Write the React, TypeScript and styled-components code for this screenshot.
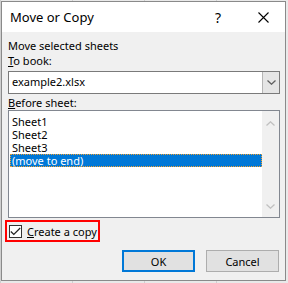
import React from "react";
import styled, { createGlobalStyle } from "styled-components";

const Global = createGlobalStyle`
  html, body { margin: 0; padding: 0; }
  body {
    width: 288px; height: 283px; overflow: hidden;
    background-color: #e9e9e9;
    background-image: linear-gradient(to right, #cfcfcf 1px, transparent 1px);
    background-size: 72px 100%;
    font-family: "Noto Sans", "Open Sans", sans-serif;
  }
`;

const Dialog = styled.div`
  box-sizing: border-box;
  margin: 1px 0 0 1px;
  width: 285px;
  height: 280px;
  border: 1px solid #8a8a8a;
  background: #f0f0f0;
  display: flex;
  flex-direction: column;
`;

const TitleBar = styled.div`
  height: 30px;
  background: #ffffff;
  display: flex;
  align-items: center;
  padding-left: 8px;
  font-size: 13px;
  color: #000;
`;

const Title = styled.div`
  flex: 1;
`;

const TitleButton = styled.div<{ $w: number }>`
  width: ${(p) => p.$w}px;
  height: 30px;
  display: flex;
  align-items: center;
  justify-content: center;
  font-size: 14px;
  color: #000;
`;

const Body = styled.div`
  flex: 1;
  display: flex;
  flex-direction: column;
  padding: 6px 5px 0 6px;
  font-size: 11px;
  color: #000;
`;

const Label = styled.div<{ $mt?: number }>`
  line-height: 15px;
  height: 15px;
  margin-top: ${(p) => p.$mt ?? 0}px;
  white-space: nowrap;
`;

const Combo = styled.div`
  box-sizing: border-box;
  margin-top: 3px;
  height: 23px;
  border: 1px solid #7a7a7a;
  background: #fff;
  display: flex;
`;

const ComboText = styled.div`
  flex: 1;
  line-height: 19px;
  padding-left: 3px;
`;

const ComboButton = styled.div`
  box-sizing: border-box;
  width: 17px;
  background: #e5e5e5;
  border-left: 1px solid #b5b5b5;
  display: flex;
  align-items: center;
  justify-content: center;
`;

const List = styled.div`
  box-sizing: border-box;
  height: 108px;
  border: 1px solid #828790;
  background: #fff;
  display: flex;
`;

const Items = styled.div`
  flex: 1;
  padding: 4px 0 0 1px;
  display: flex;
  flex-direction: column;
`;

const Item = styled.div<{ $sel?: boolean }>`
  box-sizing: border-box;
  height: 13px;
  line-height: 13px;
  padding-left: 2px;
  color: ${(p) => (p.$sel ? "#fff" : "#000")};
  background: ${(p) => (p.$sel ? "#0078d7" : "transparent")};
  outline: ${(p) => (p.$sel ? "1px dotted #f0a030" : "none")};
  outline-offset: -1px;
  white-space: nowrap;
`;

const ScrollBar = styled.div`
  width: 17px;
  background: #f0f0f0;
  display: flex;
  flex-direction: column;
  justify-content: space-between;
  align-items: center;
  padding: 10px 0 8px;
`;

const CheckRow = styled.div`
  box-sizing: border-box;
  margin: 2px 0 0 -3px;
  width: 95px;
  height: 22px;
  border: 2px solid #ff0000;
  display: flex;
  align-items: center;
  gap: 5px;
  padding-left: 2px;
  white-space: nowrap;
`;

const CheckBox = styled.div`
  box-sizing: border-box;
  width: 13px;
  height: 13px;
  border: 1px solid #333;
  background: #fff;
  display: flex;
  align-items: center;
  justify-content: center;
`;

const ButtonRow = styled.div`
  display: flex;
  justify-content: flex-end;
  gap: 11px;
  margin-top: 8px;
  padding-right: 1px;
`;

const Button = styled.div<{ $def?: boolean }>`
  box-sizing: border-box;
  width: 73px;
  height: 22px;
  background: #e1e1e1;
  border: ${(p) => (p.$def ? "2px solid #0078d7" : "1px solid #adadad")};
  display: flex;
  align-items: center;
  justify-content: center;
`;

const Chevron = ({ up, color }: { up?: boolean; color: string }) => (
  <svg width="9" height="5" viewBox="0 0 9 5">
    <path
      d={up ? "M0.5 4.5 L4.5 0.8 L8.5 4.5" : "M0.5 0.5 L4.5 4.2 L8.5 0.5"}
      fill="none"
      stroke={color}
      strokeWidth="1.3"
    />
  </svg>
);

export default function App() {
  return (
    <>
      <Global />
      <Dialog>
        <TitleBar>
          <Title>Move or Copy</Title>
          <TitleButton $w={46}>?</TitleButton>
          <TitleButton $w={44}>
            <svg width="11" height="11" viewBox="0 0 11 11">
              <path d="M0.5 0.5 L10.5 10.5 M10.5 0.5 L0.5 10.5" stroke="#000" strokeWidth="1.1" />
            </svg>
          </TitleButton>
        </TitleBar>
        <Body>
          <Label>Move selected sheets</Label>
          <Label>
            <u>T</u>o book:
          </Label>
          <Combo>
            <ComboText>example2.xlsx</ComboText>
            <ComboButton>
              <Chevron color="#606060" />
            </ComboButton>
          </Combo>
          <Label $mt={1}>
            <u>B</u>efore sheet:
          </Label>
          <List>
            <Items>
              <Item>Sheet1</Item>
              <Item>Sheet2</Item>
              <Item>Sheet3</Item>
              <Item $sel>(move to end)</Item>
            </Items>
            <ScrollBar>
              <Chevron up color="#c0c0c0" />
              <Chevron color="#c0c0c0" />
            </ScrollBar>
          </List>
          <CheckRow>
            <CheckBox>
              <svg width="11" height="9" viewBox="0 0 11 9">
                <path d="M0.8 4.5 L3.8 7.5 L10.2 1" fill="none" stroke="#222" strokeWidth="1.2" />
              </svg>
            </CheckBox>
            <span>
              <u>C</u>reate a copy
            </span>
          </CheckRow>
          <ButtonRow>
            <Button $def>OK</Button>
            <Button>Cancel</Button>
          </ButtonRow>
        </Body>
      </Dialog>
    </>
  );
}
